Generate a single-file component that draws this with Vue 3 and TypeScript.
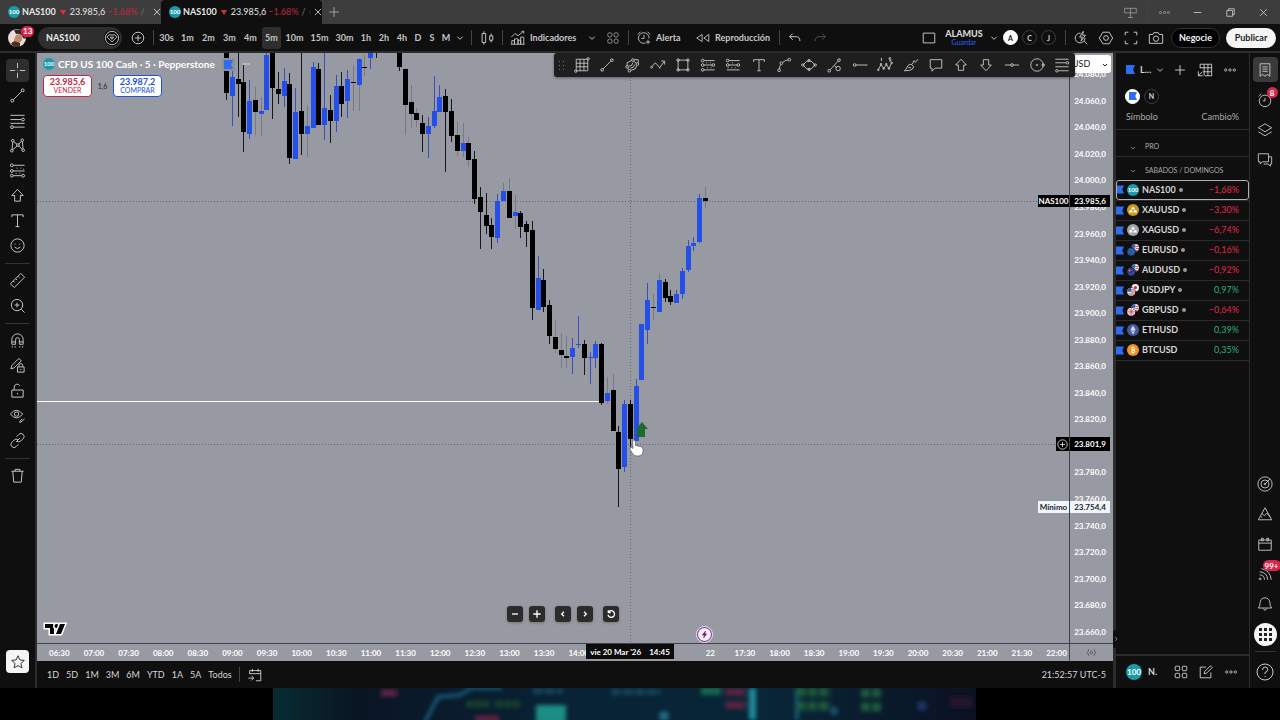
<script setup lang="ts">
import { h } from 'vue'

type Kind = 'up' | 'down'
interface Candle { i: number; top: number; bottom: number; high: number; low: number; kind: Kind; faint: boolean }
interface Quote { name: string; change: string; icon: string; live: boolean }

const c = (x: number, y: number, r: number): string =>
  `M${x - r} ${y}a${r} ${r} 0 1 0 ${2 * r} 0a${r} ${r} 0 1 0 ${-2 * r} 0z`

const icons: Record<string, string> = {
  cross: 'M9 1v5.500M9 11.500v5.500M1 9h5.500M11.500 9h5.500M8.700 9h.6',
  line: c(3.5, 14.5, 1.5) + c(14.500, 3.500, 1.500) + 'M4.600 13.400l8.800-8.800',
  hlines: 'M1.500 3.500h15M1.500 8h11.500M1.500 12h15M5 16h11.500' + c(14.8, 8, 1.5) + c(3.2, 16, 1.500),
  pattern: c(3, 14.500, 1.400) + c(4, 4, 1.400) + c(9.500, 8.500, 1.400) + c(14, 3.500, 1.400) + c(15, 14, 1.400) + 'M3.200 13L4 5.500M5 5l3.500 2.700M10.500 7.500l2.500-3M14.200 5l.7 7.500M4 13.500l4.600-4M10.500 9.600l3.500 3.500',
  forecast: c(3, 3.500, 1.500) + c(3, 9.500, 1.500) + c(3, 14.500, 1.500) + c(15, 14.500, 1.500) + 'M4.500 3.500h12M4.500 9.500h12M4.500 14.500h9M8 6.500h1M12 6.500h1M15 7.500h1M7 12h1M11 12h1',
  arrowUp: 'M9 2.500l6 6.500h-3v6H6V9H3z',
  arrowDown: 'M9 15.500L3 9h3V3h6v6h3z',
  text: 'M3 5.500V3h12v2.500M9 3v12.500M7 15.500h4',
  smile: c(9, 9, 7) + 'M6.500 7v1M11.500 7v1M6 10.800q3 3 6 0',
  ruler: 'M1.500 12.500L12.500 1.500 16.500 5.500 5.500 16.500zM4.500 9.500l1.500 1.500M7 7l1.500 1.500M9.500 4.500l1.500 1.500',
  zoom: c(8.500, 8.500, 6) + 'M13 13l3.500 3.500M8.500 6v5M6 8.500h5',
  magnet: 'M3 13V8a6 6 0 0 1 12 0v5h-4V8a2 2 0 0 0-4 0v5zM3 10.500h4M11 10.500h4M3.500 15v1.500M6.500 15v1.500M11.500 15v1.500M14.500 15v1.500',
  penLock: 'M2 12.500l1-3.500 7.500-7.500 2.500 2.500L5.500 11.500zM9 10.500h7v5.500H9zM10.500 10.500V9a2 2 0 0 1 4 0v1.500M12.500 12.500v1.500',
  lock: 'M3 8.500h12v7.500H3zM5.500 8.500V5.500a3.200 3.200 0 0 1 6-1.500M9 11.500v1.500',
  eye: 'M1.500 7.500q6-8 13 0q-6.500 8-13 0z' + c(8, 7.500, 2.300) + 'M11 15.500l3-3M12.500 16l4-3.500M11 16h2',
  link: 'M7.500 10.500l4-4M8 5l2.500-2.500a3 3 0 0 1 4.500 4.500L12.500 9.500a3 3 0 0 1-4 .3M10 13l-2.500 2.500A3 3 0 0 1 3 11L5.500 8.500a3 3 0 0 1 4-.3',
  trash: 'M2.500 4.500h13M6.500 4.500V2.500h5v2M4 4.500l1 11.500h8l1-11.500',
  star: 'M9 2l2.100 4.700 5 .5-3.800 3.400 1.100 5L9 13l-4.400 2.600 1.100-5L1.900 7.200l5-.5z',
  gridbox: 'M2.500 2.500h13v13h-13zM2.500 7h13M2.500 11h13M6.800 2.500v13M11.200 2.500v13' + c(16, 2, 1.300) + c(2, 16, 1.300),
  channel: c(3.500, 11, 1.500) + c(6, 15.500, 1.500) + c(10, 3.500, 1.500) + c(15, 8, 1.500) + 'M3.500 9.500V6.500l5-2.500M11 4.700l2.800 2.200M4.300 12.300l1 1.800M7.500 15l5-1.500 2-4M5 10.500l3.500-1 1.500-3M7 12.500l3.500-1 1.500-3M16 6.800V3h-4.500',
  zigzag: 'M2.500 10.500l3.500-4 5 5.500 5-7M12.500 4.500h4v4' + c(1.800, 11.500, 1) + 'M10 11.500l1.500 1.500',
  rect: 'M3.500 3.500h11v11h-11z' + c(3.500, 3.500, 1.400) + c(14.500, 3.500, 1.400) + c(3.500, 14.500, 1.400) + c(14.500, 14.500, 1.400),
  long: c(3, 4, 1.500) + c(3, 9, 1.500) + c(15, 9, 1.500) + c(3, 14.500, 1.500) + 'M4.500 4h12M4.500 9h9M4.500 14.500h12M7 6.500h1M11 6.500h1M8 12h1M12 12h1',
  short: c(3, 4, 1.500) + c(3, 9, 1.500) + c(15, 9, 1.500) + 'M4.500 4h12M4.500 9h9M2 14.500h14.500M3 12h1M7 12h1M11 12h1M8 6.500h1',
  curve: c(3.500, 15, 1.500) + c(6, 7, 1.500) + c(15, 3, 1.500) + 'M3.700 13.500q.3-3 1.700-5M7.300 6.200q3-2.500 6.200-3',
  ellipse: 'M2.500 9q6.500-10 13 0q-6.500 10-13 0z' + c(2, 9, 1.300) + c(16, 9, 1.300) + c(9, 4, 1.300) + c(9, 14, 1.300),
  measure: c(2.500, 15.500, 1.500) + c(13.500, 3.500, 1.500) + c(12.500, 13, 2.500) + 'M3.500 14.400l9-9.800M8.500 10l2 1.500',
  hray: c(3, 9, 1.500) + 'M4.500 9h13',
  waves: 'M1.500 14l3-5.500 3 4.500 3-4.500 3 4.500 3-6.500M5 1v3.500M16 1h-2.500v1.500h2v2h-2' + c(1.500, 14.500, .9) + c(4.500, 8, .9) + c(7.600, 13, .9) + c(10.500, 8, .9) + c(13.500, 13, .9) + c(16.500, 6.500, .9),
  brush: 'M1.500 15.500q2-1 3-4t4.500-3.500l3 2.500q-.5 4-4.500 4.500zM10.500 8l2-4 1.500 2 3-3.500M6 12h3',
  note: 'M2.500 3h13v9.500H8L4.500 16v-3.500h-2z',
  hline: c(9, 9, 1.500) + 'M1 9h6.500M10.500 9H17',
  cyclic: c(9, 9, 7) + c(9, 9, .7) + c(16, 9, 1.300),
  fib: 'M1.500 2.500h15M1.500 6.500h12M1.500 11h15M5 15.500h11.500' + c(15.200, 6.500, 1.400) + c(3.200, 15.500, 1.400),
  candles: 'M3.500 4h4v10h-4zM5.500 1.500V4M5.500 14v2.500M12 6.500h3.500v5H12zM13.700 4v2.500M13.700 11.500V14',
  indic: 'M1.500 8l4-4 3.500 2.500 6-5M2 16v-4h3v4M5 16v-6h4v6M9 16v-4.500h3V16M12 16V8h3.500v8M1 16h15.500M13 1.500h2.500V4',
  four: 'M2.500 3.500a1 1 0 0 1 1-1h3a1 1 0 0 1 1 1v3a1 1 0 0 1-1 1h-3a1 1 0 0 1-1-1zM10.500 3.500a1 1 0 0 1 1-1h3a1 1 0 0 1 1 1v3a1 1 0 0 1-1 1h-3a1 1 0 0 1-1-1zM2.500 11.500a1 1 0 0 1 1-1h3a1 1 0 0 1 1 1v3a1 1 0 0 1-1 1h-3a1 1 0 0 1-1-1zM10.500 11.500a1 1 0 0 1 1-1h3a1 1 0 0 1 1 1v3a1 1 0 0 1-1 1h-3a1 1 0 0 1-1-1z',
  rings: c(5.500, 5.500, 2.500) + c(12.500, 5.500, 2.500) + c(5.500, 12.500, 2.500) + c(12.500, 12.500, 2.500),
  clock: 'M14.700 9.500a6 6 0 1 0-4 5.200M9 5.500v4H6M2 5l3-3M13 2l3 3M13.500 11v5M11 13.500h5',
  replay: 'M8 5v8L2 9zM15.500 5v8L10 9z',
  undo: 'M6.500 4L3 7.500 6.500 11M3 7.500h7.500q4 0 4 5',
  redo: 'M11.500 4L15 7.500 11.500 11M15 7.500H7.500q-4 0-4 5',
  square: 'M2.500 3.500h13v11h-13z',
  quick: 'M13.500 9a5.500 5.500 0 1 1-5-5.500M12.500 12.500l3.500 3.500M11.500 1.500L7.500 8h3l-1.500 4.500 5-6.500h-3z',
  hex: 'M5.500 2.500h7L16.500 9l-4 6.500h-7L1.500 9z' + c(9, 9, 2.700),
  full: 'M2.500 6V2.500H6M12 2.500h3.500V6M15.500 12v3.500H12M6 15.500H2.500V12',
  camera: 'M1.500 5h4l1-2h5l1 2h4v10h-15z' + c(9, 9.800, 3),
  plusCircle: c(9, 9, 6.500) + 'M9 5.500v7M5.500 9h7',
  gem: c(9, 9, 7.500) + 'M5.500 5.500h7l2 2.500L9 13.500 3.500 8zM7 8h4l-2 2.500z',
  plus: 'M9 3.500v11M3.500 9h11',
  close: 'M5 5l8 8M13 5l-8 8',
  chev: 'M6 7.500l3 3 3-3',
  dots: c(3.500, 9, 1.500) + c(9, 9, 1.500) + c(14.500, 9, 1.500),
  table: 'M3.500 7V2.500h13v13H9M3.500 6.500h13M8 2.500v13M12.300 2.500v13M7 11h9.500M1.500 10.500v5h5M1.500 15.500L6 11',
  list: 'M3.500 2h11v14l-2.700-2-2.800 2-2.800-2-2.700 2zM6 5.500h6M6 8h6M6 10.500h6',
  alarm: c(9, 10, 6.500) + 'M9 6.500V10H6.500M2 5l3-3M13 2l3 3',
  layers: 'M9 2l7.500 4.500L9 11 1.500 6.500zM1.500 11L9 15.500l7.500-4.500',
  chat: 'M1.500 2h11.500v9H6l-2.500 2.500V11h-2zM13 5.500h3.500v8h-1.500V16l-2.500-2.500H7.500',
  radar: c(9, 9, 8) + c(9, 9, 4.500) + c(9, 9, 1) + 'M9.500 8.500l5-5',
  pyramid: 'M9 2l7.500 13.500h-15zM5.500 8.500l3 2.500L11 8l4 4.500M4 11.500l2 1.500',
  calendar: 'M2 4.500h14v11.500H2zM2 8h14M5 2.500h2v3H5zM11 2.500h2v3h-2z',
  feed: c(3.500, 14.500, 1) + 'M3 10q5 0 5.500 5.500M3 6.500q8.500.5 9 9M5 3q10 2 11 12.500',
  bell: 'M1.500 13.500q2-2 2-6a5.500 5.500 0 0 1 11 0q0 4 2 6zM7 14q2 4 4 0',
  help: c(9, 9, 8) + 'M6.500 7q0-3 2.700-3t2.500 2.500T9 9.500v1.500M9 13v1',
  edit: 'M9 3.500H2.500v12h12V9.500M7 11l.5-2.500L14 2l2 2-6.500 6.500z',
  goto: 'M3 8V4h12.500v11.500H10M3 7.500h12.500M6 2v3.500M12.500 2v3.500M1.500 12.500h6M5 10l2.500 2.500L5 15',
  axis: 'M5 3.500L2.500 9 5 14.500M13 3.500L15.500 9 13 14.500' + c(9, 9, 2),
  panels: 'M2 4h14v5.500H2zM9 4v11M6 15h6',
  restore: 'M4.500 6.500h7v7h-7zM6.500 6.500v-2h7v7h-2',
  minimize: 'M4.500 9h9',
  prev: 'M10.500 5.500L7 9l3.500 3.500',
  next: 'M7.500 5.500L11 9l-3.500 3.500',
  reset: 'M5 6.500a5 5 0 1 1-.5 4M5 3.500v3.500h3.500',
  bolt: 'M10.500 3.500L5.500 10h3.500l-1.500 4.500 5-6.500H9.500z',
}

const Icon = (props: { name: string }) =>
  h('svg', { class: 'icon', viewBox: '0 0 18 18', 'aria-hidden': 'true' }, [h('path', { d: icons[props.name] })])
Icon.props = ['name']

const Flag = () =>
  h('svg', { class: 'flag', viewBox: '0 0 9 9', 'aria-hidden': 'true' }, [h('path', { d: 'M0 0h9L7 4.500 9 9H0z', fill: '#2f6df0' })])

const tabs = [{ active: false }, { active: true }]
const frames = [
  ['30s', 'm'], ['1m', 'm'], ['2m', 'm'], ['3m', 'm'], ['4m', 'm'], ['5m', 'm'],
  ['10m', 'l'], ['15m', 'l'], ['30m', 'l'], ['1h', 's'], ['2h', 's'], ['4h', 's'], ['D', 'xs'], ['S', 'xs'], ['M', 'xs'],
]
const leftGroups = [
  ['cross', 'line', 'hlines', 'pattern', 'forecast', 'arrowUp', 'text', 'smile'],
  ['ruler', 'zoom'],
  ['magnet', 'penLock', 'lock', 'eye', 'link'],
  ['trash'],
]
const drawTools = ['gridbox', 'line', 'channel', 'zigzag', 'rect', 'long', 'short', 'text', 'curve', 'ellipse', 'measure', 'hray', 'waves', 'brush', 'note', 'arrowUp', 'arrowDown', 'hline', 'cyclic', 'fib']
const ranges = ['1D', '5D', '1M', '3M', '6M', 'YTD', '1A', '5A', 'Todos']

const quotes: Quote[] = [
  { name: 'NAS100', change: '−1,68%', icon: 'nas', live: true },
  { name: 'XAUUSD', change: '−3,30%', icon: 'gold', live: true },
  { name: 'XAGUSD', change: '−6,74%', icon: 'silver', live: true },
  { name: 'EURUSD', change: '−0,16%', icon: 'eur', live: true },
  { name: 'AUDUSD', change: '−0,92%', icon: 'aud', live: true },
  { name: 'USDJPY', change: '0,97%', icon: 'jpy', live: true },
  { name: 'GBPUSD', change: '−0,64%', icon: 'gbp', live: true },
  { name: 'ETHUSD', change: '0,39%', icon: 'eth', live: false },
  { name: 'BTCUSD', change: '0,35%', icon: 'btc', live: false },
]

const format = (p: number): string => {
  const [whole, dec] = p.toFixed(1).split('.')
  return `${whole.slice(0, 2)}.${whole.slice(2)},${dec}`
}
const prices = Array.from({ length: 22 }, (_, i) => format(24080 - i * 20))
const clock = (half: number): string => `${String(Math.floor(half / 2)).padStart(2, '0')}:${half % 2 ? '30' : '00'}`
const morning = Array.from({ length: 16 }, (_, i) => clock(13 + i))
const evening = ['22', ...Array.from({ length: 10 }, (_, i) => clock(35 + i))]

/* index, body top, body bottom, high, low, kind (u/d), f = faint wick */
const raw = `0 0 40 0 47 d|1 24 43 15 73 u|2 26 31 0 64 d|3 29 79 12 99 d|4 48 81 27 86 u|5 47 59 34 82 d f|6 58 61 44 83 u f
7 2 57 0 57 u|8 0 35 0 66 d|9 36 41 19 51 d|10 28 43 15 54 u|11 31 105 20 111 d|12 59 106 35 106 u|13 58 81 0 102 d
14 73 81 52 104 u f|15 14 75 9 75 u|16 16 72 10 72 d|17 55 72 0 87 u|18 57 68 42 90 d|19 33 68 22 79 u|20 33 51 19 64 d
21 26 48 17 65 u|22 29 30 12 58 d f|23 6 32 5 58 u f|24 14 15 2 23 d f|25 0 5 0 16 u|26 0 0 0 5 d|30 0 14 0 18 d|31 16 52 15 82 d f
32 49 61 32 75 d f|33 60 67 55 74 d f|34 70 81 62 99 d|35 73 81 64 105 u|36 58 73 23 75 u|37 44 59 32 59 u|38 43 59 36 119 d
39 58 83 46 89 d|40 82 98 69 103 d f|41 90 98 70 104 u f|42 90 107 84 114 d f|43 106 146 98 151 d|44 144 159 134 196 d
45 162 173 140 181 d|46 172 184 165 196 d|47 148 185 141 190 u|48 138 148 130 148 u f|49 138 165 125 165 d f|50 159 163 142 176 u f
51 160 174 158 185 d|52 171 179 168 194 d|53 177 255 168 267 d|54 225 257 203 257 u|55 227 254 216 259 d|56 252 283 247 291 d
57 284 296 267 300 d f|58 297 302 280 315 d f|59 303 305 283 315 d f|60 295 304 285 321 u|61 291 292 263 295 u|62 291 305 287 322 d
63 304 305 299 331 u|64 291 305 288 315 u|65 291 350 290 352 d|66 340 348 324 351 u f|67 337 378 321 378 d f|68 379 416 373 454 d
69 351 414 347 419 u|70 351 386 347 394 d|71 333 388 326 388 u|72 271 327 271 327 u|73 247 277 230 291 u|74 254 255 241 267 d f
75 227 259 220 259 u f|76 229 245 226 249 d|77 243 249 237 252 d|78 241 250 237 250 u|79 218 241 215 246 u|80 193 217 187 219 u
81 190 193 184 198 u|82 145 189 141 190 u|83 145 148 134 155 d f`
const candles: Candle[] = raw.split(/[|\n]/).map((row) => {
  const p = row.trim().split(' ')
  return { i: +p[0], top: +p[1], bottom: +p[2], high: +p[3], low: +p[4], kind: p[5] === 'u' ? 'up' : 'down', faint: p[6] === 'f' }
})
const cx = (i: number): number => Math.round(189 + i * 5.77)
</script>

<template>
  <div class="app">
    <header class="tabs">
      <div v-for="(t, n) in tabs" :key="n" class="tab" :class="{ on: t.active }">
        <span class="coin nas small">100</span>
        <b>NAS100</b><i class="tri"></i><span>23.985,6</span><span class="neg">−1.68%</span><span class="slash">/</span><span class="slash cut">‹</span>
        <button class="bare end" aria-label="Cerrar pestaña"><Icon name="close" /></button>
      </div>
      <button class="bare newtab" aria-label="Nueva pestaña"><Icon name="plus" /></button>
      <div class="window">
        <button class="bare" aria-label="Paneles"><Icon name="panels" /></button>
        <span class="vr"></span>
        <button class="bare tiny" aria-label="Más"><Icon name="dots" /></button>
        <button class="bare" aria-label="Minimizar"><Icon name="minimize" /></button>
        <button class="bare" aria-label="Restaurar"><Icon name="restore" /></button>
        <button class="bare" aria-label="Cerrar"><Icon name="close" /></button>
      </div>
    </header>

    <nav class="bar">
      <div class="profile">
        <svg class="face" viewBox="0 0 18 18" aria-hidden="true">
          <circle cx="9" cy="9" r="9" fill="#e9ddd5" /><path d="M6 1a9 9 0 0 1 12 8q-1 1-3 0Q13 4 8 5z" fill="#35251f" /><path d="M8 6q5-2 6 2t-3 6-5-3z" fill="#bd8a70" /><path d="M3 15q2-4 6-2l3 1v4H7z" fill="#4b2c26" />
        </svg>
        <span class="badge">13</span>
      </div>
      <button class="symbol">NAS100 <Icon name="gem" /></button>
      <button class="bare slot" aria-label="Comparar"><Icon name="plusCircle" /></button>
      <span class="vr"></span>
      <div class="frames">
        <button v-for="f in frames" :key="f[0]" class="frame" :class="[f[1], { on: f[0] === '5m' }]"><span>{{ f[0] }}</span></button>
        <button class="bare mini" aria-label="Más intervalos"><Icon name="chev" /></button>
      </div>
      <span class="vr"></span>
      <button class="bare slot30" aria-label="Velas"><Icon name="candles" /></button>
      <span class="vr"></span>
      <button class="label ind"><Icon name="indic" />Indicadores</button>
      <button class="bare slot22" aria-label="Favoritos"><Icon name="chev" /></button>
      <button class="bare dim" aria-label="Plantillas"><Icon name="rings" /></button>
      <span class="vr"></span>
      <button class="label alert"><Icon name="clock" />Alerta</button>
      <button class="label play"><Icon name="replay" />Reproducción</button>
      <span class="vr"></span>
      <button class="bare slot30" aria-label="Deshacer"><Icon name="undo" /></button>
      <button class="bare faded" aria-label="Rehacer"><Icon name="redo" /></button>
      <div class="right">
        <button class="bare slot24" aria-label="Diseño"><Icon name="square" /></button>
        <button class="layout"><b>ALAMUS</b><span>Guardar</span></button>
        <button class="bare mini" aria-label="Diseños"><Icon name="chev" /></button>
        <button class="letter on">A</button><button class="letter">C</button><button class="letter">J</button>
        <span class="vr gap"></span>
        <button class="bare slot" aria-label="Buscar"><Icon name="quick" /></button>
        <button class="bare slot" aria-label="Ajustes"><Icon name="hex" /></button>
        <button class="bare slot" aria-label="Pantalla completa"><Icon name="full" /></button>
        <button class="bare slot" aria-label="Captura"><Icon name="camera" /></button>
        <button class="pill dark">Negocie</button>
        <button class="pill">Publicar</button>
      </div>
    </nav>

    <div class="body">
      <aside class="tools">
        <div v-for="(g, gi) in leftGroups" :key="gi" class="group">
          <button v-for="t in g" :key="t" class="bare tool" :class="{ on: t === 'cross' }" :aria-label="t"><Icon :name="t" /></button>
        </div>
        <button class="bare fav" aria-label="Favoritos"><Icon name="star" /></button>
      </aside>

      <main class="chart">
        <div class="upper">
          <section class="plot">
            <svg class="canvas" role="img" aria-label="Gráfico de velas NAS100">
              <line class="cross" x1="0" x2="100%" y1="148.500" y2="148.500" />
              <line class="cross" x1="0" x2="100%" y1="391.500" y2="391.500" />
              <line class="cross" x1="593.500" x2="593.500" y1="0" y2="100%" />
              <line x1="0" x2="564" y1="348.500" y2="348.500" stroke="#fff" />
              <g v-for="k in candles" :key="k.i" :class="[k.kind, { faint: k.faint }]">
                <rect class="wick" :x="cx(k.i)" :y="k.high" width="1" :height="k.low - k.high" />
                <rect v-if="k.bottom > k.top" class="solid" :x="cx(k.i) - 2" :y="k.top" width="5" :height="k.bottom - k.top" />
              </g>
              <path d="M605 369l6 7h-3v8h-8v-8h-1z" fill="#1c6b2c" />
              <path d="M595.500 389q0-2 1.500-2t1.500 2v3.500l5 1q2.500.5 2.500 2.500v2q0 5-5 5h-1q-3 0-4-2l-3-4.500q-.5-2 1.500-2l1.500 1z" fill="#fff" stroke="#444" stroke-width=".6" />
              <g transform="translate(6 568)" class="logo">
                <path d="M2 3h9v10H7V7H2z" /><circle cx="13.500" cy="5" r="2" /><path d="M17 3h5l-4 10h-5z" />
              </g>
            </svg>
            <div class="legend">
              <span class="coin nas">100</span><span>CFD US 100 Cash · 5 · Pepperstone</span><span class="mark"><Flag /></span><i class="dash"></i>
            </div>
            <div class="deal">
              <button class="sell"><b>23.985,6</b>VENDER</button><span>1,6</span><button class="buy"><b>23.987,2</b>COMPRAR</button>
            </div>
            <div class="pager">
              <button aria-label="Alejar"><Icon name="minimize" /></button><button aria-label="Acercar"><Icon name="plus" /></button>
              <button class="sp" aria-label="Atrás"><Icon name="prev" /></button><button aria-label="Adelante"><Icon name="next" /></button>
              <button class="sp" aria-label="Restablecer"><Icon name="reset" /></button>
            </div>
            <span class="event"><Icon name="bolt" /></span>
            <span class="tag last">NAS100</span>
            <span class="tag hover"><Icon name="plusCircle" /></span>
            <span class="tag low">Mínimo</span>
          </section>
          <section class="prices">
            <div class="scale"><span v-for="p in prices" :key="p">{{ p }}</span></div>
            <select class="currency" aria-label="Divisa"><option>USD</option></select>
            <svg class="caret" viewBox="0 0 6 4" aria-hidden="true"><path d="M1 1l2 2 2-2" /></svg>
            <span class="val last">23.985,6</span>
            <span class="val hover">23.801,9</span>
            <span class="val low">23.754,4</span>
          </section>
          <div class="draw">
            <span class="grip"><i v-for="n in 6" :key="n"></i></span>
            <button v-for="t in drawTools" :key="t" class="bare" :aria-label="t"><Icon :name="t" /></button>
          </div>
        </div>
        <div class="times">
          <div class="hours">
            <span v-for="t in morning" :key="t">{{ t }}</span><i></i><span v-for="t in evening" :key="t">{{ t }}</span>
            <div class="stamp"><span>vie 20 Mar '26</span><span>14:45</span></div>
          </div>
          <button class="bare corner" aria-label="Escala"><Icon name="axis" /></button>
        </div>
        <footer class="ranges">
          <button v-for="r in ranges" :key="r" class="range">{{ r }}</button>
          <span class="vr"></span>
          <button class="bare" aria-label="Ir a"><Icon name="goto" /></button>
          <time>21:52:57 UTC-5</time>
        </footer>
      </main>

      <aside class="watch">
        <button class="handle" aria-label="Contraer"><Icon name="next" /></button>
        <div class="whead">
          <Flag /><span class="wname">L...</span><button class="bare mini" aria-label="Listas"><Icon name="chev" /></button>
          <button class="bare slot" aria-label="Añadir"><Icon name="plus" /></button>
          <button class="bare slot" aria-label="Tabla"><Icon name="table" /></button>
          <button class="bare slot small" aria-label="Más"><Icon name="dots" /></button>
        </div>
        <div class="lists"><button class="letter on" aria-label="Lista azul"><Flag /></button><button class="letter">N</button></div>
        <table>
          <thead><tr><th>Símbolo</th><th class="num">Cambio%</th></tr></thead>
          <tbody>
            <tr class="sec pro"><td colspan="2"><Icon name="chev" />PRO</td></tr>
            <tr class="sec"><td colspan="2"><Icon name="chev" />SABADOS / DOMINGOS</td></tr>
            <tr v-for="q in quotes" :key="q.name" class="quote" :class="{ on: q.name === 'NAS100' }">
              <td>
                <div class="sym">
                  <Flag />
                  <span v-if="q.icon === 'nas'" class="coin nas">100</span>
                  <svg v-else class="sicon" viewBox="0 0 12 12" aria-hidden="true">
                    <template v-if="q.icon === 'gold' || q.icon === 'silver'">
                      <circle cx="6" cy="6" r="6" :fill="q.icon === 'gold' ? '#c79a1f' : '#a4a4ab'" />
                      <path d="M5 3.200h2l.8 2.200H4.200zM2.800 6.200h2.200l.7 2.200H2zM7 6.200h2.200l.8 2.200H6.300z" fill="#fff" />
                    </template>
                    <template v-else-if="q.icon === 'eth'">
                      <circle cx="6" cy="6" r="6" fill="#475a9e" /><path d="M6 1.500L8.700 6 6 10.500 3.300 6z" fill="#cfd8ff" /><path d="M3.300 6L6 7.500 8.700 6" fill="none" stroke="#475a9e" stroke-width=".7" />
                    </template>
                    <template v-else-if="q.icon === 'btc'">
                      <circle cx="6" cy="6" r="6" fill="#ef9422" /><path d="M4.500 3.500h2.200q1.500 1.200 0 2.500H5M5 6h2q1.600 1.300 0 2.600H4.300M5 3.500v5M6 2.500v1M6 8.600v1" fill="none" stroke="#fff" />
                    </template>
                    <template v-else>
                      <circle cx="8.300" cy="3.700" r="3.700" fill="#f3eeee" />
                      <path v-if="q.icon !== 'jpy'" d="M8.500 2.500h3.300M8.500 4.500h3.300M7 6.500h3.500" stroke="#d23b4c" stroke-width=".9" />
                      <path v-if="q.icon !== 'jpy'" d="M4.600 3.700A3.700 3.700 0 0 1 8.300 0v3.700z" fill="#355fb5" />
                      <circle v-else cx="8.500" cy="3.500" r="1.500" fill="#d5293e" />
                      <circle cx="4.200" cy="7.800" r="4.500" fill="#101010" />
                      <circle cx="4.200" cy="7.800" r="4" :fill="q.icon === 'eur' ? '#1c4fa8' : q.icon === 'aud' ? '#24408e' : '#efe3e5'" />
                      <circle v-if="q.icon === 'eur'" cx="4.200" cy="7.800" r="2" fill="none" stroke="#b8b24a" stroke-width=".7" stroke-dasharray="1 1" />
                      <path v-if="q.icon === 'aud'" d="M1 6.500h3.500M2.700 4.500V8M6 8.500v1M4 10v1" stroke="#e5566a" stroke-width=".8" />
                      <path v-if="q.icon === 'jpy'" d="M4 6h3.800M4 8h4M1.500 10h5.500" stroke="#d23b4c" stroke-width=".9" />
                      <path v-if="q.icon === 'jpy'" d="M.2 7.800a4 4 0 0 1 4-4v4z" fill="#355fb5" />
                      <path v-if="q.icon === 'gbp'" d="M.2 7.800h8M4.200 3.800v8M1.500 5l5.400 5.600M6.900 5l-5.400 5.600" stroke="#d0475d" stroke-width=".8" />
                    </template>
                  </svg>
                  <span>{{ q.name }}</span><i v-if="q.live" class="live"></i>
                </div>
              </td>
              <td class="num" :class="q.change.startsWith('−') ? 'neg' : 'pos'">{{ q.change }}</td>
            </tr>
          </tbody>
        </table>
        <div class="detail">
          <span class="coin nas big">100</span><b>N.</b>
          <button class="bare slot" aria-label="Vista"><Icon name="four" /></button>
          <button class="bare slot" aria-label="Notas"><Icon name="edit" /></button>
          <button class="bare slot small" aria-label="Más"><Icon name="dots" /></button>
        </div>
      </aside>

      <aside class="rail">
        <button class="bare on" aria-label="Lista de seguimiento"><Icon name="list" /></button>
        <button class="bare" aria-label="Alertas"><Icon name="alarm" /><span class="badge">8</span></button>
        <button class="bare" aria-label="Capas"><Icon name="layers" /></button>
        <button class="bare" aria-label="Chats"><Icon name="chat" /></button>
        <span class="grow"></span>
        <button class="bare" aria-label="Filtros"><Icon name="radar" /></button>
        <button class="bare" aria-label="Pine"><Icon name="pyramid" /></button>
        <button class="bare" aria-label="Calendario"><Icon name="calendar" /></button>
        <button class="bare" aria-label="Noticias"><Icon name="feed" /><span class="badge wide">99+</span></button>
        <button class="bare" aria-label="Notificaciones"><Icon name="bell" /></button>
        <button class="bare apps" aria-label="Productos"><i v-for="n in 9" :key="n"></i></button>
        <hr />
        <button class="bare ask" aria-label="Ayuda"><Icon name="help" /></button>
      </aside>
    </div>

    <div class="strip">
      <svg viewBox="0 0 703 32" preserveAspectRatio="none" aria-hidden="true">
        <defs>
          <linearGradient id="sea"><stop offset="0" stop-color="#082b32" /><stop offset=".12" stop-color="#0a1524" /><stop offset=".4" stop-color="#082234" /><stop offset=".7" stop-color="#082637" /><stop offset="1" stop-color="#0b1122" /></linearGradient>
          <filter id="soft"><feGaussianBlur stdDeviation="2" /></filter>
        </defs>
        <rect width="703" height="32" fill="url(#sea)" />
        <g filter="url(#soft)">
          <path d="M152 34l13-25 22-2 12-7h30" fill="none" stroke="#1d6685" stroke-width="3" />
          <rect x="263" y="17" width="30" height="18" fill="#1a8d84" />
          <path d="M338 4h50M260 3h30" stroke="#17455b" stroke-width="6" stroke-dasharray="10 2" />
          <path d="M193 16h24m5 0h25" stroke="#163f2c" stroke-width="7" stroke-dasharray="8 1" />
          <path d="M428 3h20" stroke="#156650" stroke-width="8" />
          <path d="M452 4h20M452 17h20M108 5h16M202 31h24" stroke="#5f2440" stroke-width="7" />
          <rect x="476" y="0" width="7" height="32" fill="#248a9d" />
          <path d="M524 0v32" stroke="#155e72" stroke-width="4" />
          <path d="M524 4h34M524 18h34M588 5h20M588 19h20" stroke="#1d5a3b" stroke-width="9" stroke-dasharray="9 2" />
          <circle cx="391" cy="28" r="5" fill="#226a83" /><circle cx="561" cy="23" r="4" fill="#1b516f" /><circle cx="649" cy="18" r="5" fill="#1b3568" />
          <rect x="676" y="8" width="24" height="12" fill="#21172c" />
        </g>
      </svg>
    </div>
  </div>
</template>

<style>
body { margin: 0; background: #000; }
</style>

<style scoped>
* { box-sizing: border-box; }
.app { display: flex; flex-direction: column; min-height: 100vh; background: #000; color: #d6d6d6; font: 9px/12px Lato, "Noto Sans", sans-serif; }
button { font: inherit; color: inherit; background: none; border: 0; padding: 0; margin: 0; display: flex; align-items: center; justify-content: center; white-space: nowrap; flex: none; }
.icon { width: 16px; height: 16px; fill: none; stroke: currentColor; stroke-width: 1; flex: none; overflow: visible; }
.flag { width: 9px; height: 9px; flex: none; }
.vr { width: 1px; height: 15px; background: #444; flex: none; }
.coin { display: inline-flex; align-items: center; justify-content: center; width: 12px; height: 12px; border-radius: 50%; background: #1a9aaa; color: #fff; font-size: 6px; line-height: 6px; font-weight: 700; flex: none; }
.coin.big { width: 16px; height: 16px; font-size: 8px; }
.neg { color: #e0294a; }
.pos { color: #2bb07f; }
.badge { position: absolute; display: flex; align-items: center; justify-content: center; height: 11px; min-width: 11px; padding: 0 2px; border-radius: 6px; background: #d8264c; color: #fff; font-size: 8px; line-height: 8px; font-weight: 700; }

.tabs { display: flex; align-items: center; height: 24px; background: #3d3d3d; }
.tab { display: flex; align-items: center; width: 161px; height: 24px; padding: 0 2px 0 8px; white-space: nowrap; color: #e6e6e6; }
.tab.on { background: #0f0f0f; border-radius: 4px 4px 0 0; }
.tab b { margin-left: 2px; font-weight: 700; }
.tab .tri { margin: 0 4px; border: 3px solid transparent; border-top: 5px solid #e0294a; border-bottom: 0; }
.tab .neg { margin-left: 2px; color: #c02644; }
.slash { margin-left: 3px; color: #777; }
.cut { color: #444; }
.end { margin-left: auto; }
.tab .icon { width: 14px; height: 14px; }
.newtab { margin-left: 4px; color: #aaa; }
.window { display: flex; align-items: center; margin-left: auto; color: #ccc; }
.window .bare { width: 33px; }
.window .bare:first-child { color: #999; }
.window .tiny .icon { width: 13px; color: #aaa; }
.window .icon { width: 15px; height: 15px; }

.bar { display: flex; align-items: center; height: 29px; background: #0f0f0f; border-bottom: 2px solid #2c2c2c; padding: 0 4px 0 8px; font-weight: 700; }
.profile { position: relative; width: 30px; }
.face { display: block; width: 18px; height: 18px; }
.profile .badge { top: -3px; left: 13px; }
.symbol { width: 84px; height: 22px; padding: 0 2px 0 8px; justify-content: space-between; background: #2e2e2e; border-radius: 11px; color: #eee; }
.symbol .icon { color: #ccc; background: #0f0f0f; border-radius: 50%; }
.slot { width: 25px; }
.slot30 { width: 30px; }
.slot24 { width: 24px; }
.slot22 { width: 22px; }
.symbol + .slot { width: 31px; }
.mini { width: 14px; }
.frames { display: flex; align-items: center; padding-left: 2px; margin-right: 4px; }
.frame { height: 22px; border-radius: 3px; color: #c4c4c4; }
.frame.m { width: 21px; }
.frame.l { width: 25px; }
.frame.s { width: 18px; }
.frame.xs { width: 14px; }
.frame.on span { background: #2e2e2e; border-radius: 3px; padding: 5px 3px; }
.label { color: #c8c8c8; gap: 4px; justify-content: flex-start; padding-left: 7px; }
.ind { width: 78px; }
.alert { width: 66px; }
.play { width: 84px; padding-left: 0; }
.dim { color: #999; width: 20px; margin-right: 5px; }
.faded { color: #555; width: 20px; }
.right { display: flex; align-items: center; margin-left: auto; }
.layout { flex-direction: column; width: 46px; line-height: 10px; }
.layout span { color: #2962ff; font-size: 7px; line-height: 7px; font-weight: 400; }
.letter { width: 15px; height: 15px; margin: 0 2px; border: 1px solid #3d3d3d; border-radius: 50%; font-size: 7px; line-height: 8px; font-weight: 700; }
.letter.on { background: #fff; border-color: #fff; color: #111; }
.gap { margin: 0 2px 0 7px; }
.pill { height: 20px; width: 50px; border-radius: 10px; background: #f5f5f5; color: #222; margin-left: 6px; }
.pill.dark { width: 49px; background: #000; color: #f5f5f5; border: 1px solid #333; margin-left: 3px; }

.body { flex: 1; display: flex; min-height: 0; }
.tools { width: 37px; flex: none; display: flex; flex-direction: column; align-items: center; background: #0f0f0f; border-right: 2px solid #2c2c2c; padding: 5px 0 15px; color: #ccc; }
.group + .group { border-top: 1px solid #333; margin-top: 5px; padding-top: 4px; }
.tool { width: 25px; height: 25px; }
.tool .icon { width: 17px; height: 17px; }
.tool.on { height: 23px; width: 23px; margin: 1px; background: #2e2e2e; border-radius: 4px; }
.fav { margin-top: auto; width: 23px; height: 23px; border-radius: 4px; background: #f5f5f5; color: #222; }

.chart { flex: 1; min-width: 0; display: flex; flex-direction: column; background: #989aa3; }
.upper { position: relative; flex: 1; display: flex; border-bottom: 1px solid #3f424a; }
.plot { position: relative; flex: 1; min-width: 0; border-right: 1px solid #3f424a; }
.canvas { position: absolute; inset: 0; width: 100%; height: 100%; }
.cross { stroke: #62656e; stroke-dasharray: 1 2; }
.up rect { fill: #2450e8; }
.down rect { fill: #000; }
.up .wick { fill: #3a4fb8; }
.down .wick { fill: #15171c; }
.faint .wick { fill: #777983; }
.logo { fill: #000; stroke: #fff; stroke-width: 3; paint-order: stroke; }
.legend { position: absolute; top: 4px; left: 6px; display: flex; align-items: center; gap: 3px; height: 14px; color: #fff; font-size: 10px; line-height: 14px; font-weight: 700; white-space: nowrap; }
.mark { display: flex; margin-left: 4px; padding: 2px; background: #8b9099; }
.dash { width: 8px; height: 2px; margin-left: 4px; background: #b4b6bc; }
.deal { position: absolute; top: 22px; left: 6px; display: flex; align-items: center; font-size: 7px; }
.deal > span { width: 21px; text-align: center; color: #222; }
.deal button { flex-direction: column; width: 49px; height: 22px; border: 1px solid; border-radius: 4px; background: #fff; line-height: 9px; }
.deal b { font-size: 9px; }
.sell { color: #c22744; }
.buy { color: #2450d8; }
.pager { position: absolute; left: 470px; bottom: 21px; display: flex; gap: 6px; }
.pager button { width: 16px; height: 16px; border-radius: 3px; background: #2b2b2b; color: #fff; box-shadow: 0 1px 3px #5558; }
.pager .icon { width: 12px; height: 12px; stroke-width: 2; }
.pager .sp { margin-left: 4px; }
.event { position: absolute; left: 660px; bottom: 1px; width: 15px; height: 15px; display: flex; align-items: center; justify-content: center; border: 1px solid #5b2470; border-radius: 50%; background: #fbeaff; color: #5b2470; outline: 1px solid #f6dcfa; }
.event .icon { width: 11px; height: 11px; fill: currentColor; }
.tag, .val { position: absolute; right: 0; display: flex; align-items: center; justify-content: center; height: 12px; padding: 0 2px; background: #000; color: #fff; font-size: 8px; line-height: 12px; font-weight: 700; }
.last { top: 142px; }
.hover { top: 384px; height: 14px; }
.low { top: 448px; background: #f0f4fb; color: #22252d; }
.tag { width: 31px; }
.tag.hover { width: 13px; }
.tag.hover .icon { width: 13px; height: 13px; }
.prices { position: relative; width: 43px; flex: none; display: flex; overflow: hidden; }
.val { left: 0; right: 3px; padding: 0; }
.scale { flex: 1; display: flex; flex-direction: column; margin: 8px 3px -2px 0; font-size: 8px; line-height: 10px; font-weight: 700; color: #fff; text-align: center; }
.scale span { flex: 1; display: flex; align-items: center; justify-content: center; }
.currency { position: absolute; top: 2px; left: 1px; width: 40px; height: 18px; appearance: none; border: 0; border-radius: 3px; background: #fff; color: #222; font: 9px/12px Lato, sans-serif; padding: 0 0 0 1px; }
.caret { position: absolute; top: 10px; right: 5px; width: 6px; height: 4px; fill: none; stroke: #222; }
.draw { position: absolute; top: 0; left: 517px; right: 38px; height: 24px; display: flex; align-items: center; background: #1e1e1e; border-radius: 3px; color: #ccc; box-shadow: 0 1px 3px #0006; }
.draw .bare { flex: 1; }
.grip { display: grid; grid-template-columns: 1px 1px; gap: 3px; width: 15px; justify-content: center; }
.grip i { width: 1px; height: 1px; background: #777; }
.times { display: flex; height: 17px; font-size: 8px; font-weight: 700; color: #fff; }
.hours { position: relative; flex: 1; display: flex; align-items: center; padding-left: 5px; margin-right: -5px; }
.hours > span { flex: 1 1 0; text-align: center; }
.hours > i { flex: 2.8 1 0; }
.stamp { position: absolute; left: 549px; top: 0; width: 88px; height: 15px; display: flex; gap: 8px; align-items: center; justify-content: center; background: #0c0c0c; white-space: nowrap; }
.corner { width: 44px; border-left: 1px solid #3f424a; color: #33363d; }
.corner .icon { width: 11px; height: 11px; }
.ranges { display: flex; align-items: center; gap: 7px; height: 27px; padding: 0 7px 0 10px; background: #0f0f0f; }
.ranges time { margin-left: auto; }

.watch { position: relative; width: 136px; flex: none; display: flex; flex-direction: column; background: #0f0f0f; border-left: 3px solid #2c2c2c; }
.handle { position: absolute; left: -3px; top: 577px; width: 6px; height: 18px; border-radius: 2px; background: #0f0f0f; }
.handle .icon { width: 10px; height: 10px; }
.whead { display: flex; align-items: center; height: 33px; padding-left: 10px; }
.wname { margin-left: 5px; width: 13px; font-weight: 700; }
.small .icon { width: 14px; height: 14px; }
.lists { display: flex; height: 20px; align-items: center; padding-left: 7px; }
.letter .flag { width: 8px; height: 8px; }
table { width: 100%; border-collapse: collapse; table-layout: fixed; }
th, td { padding: 0; text-align: left; font-weight: 400; }
th { height: 23px; padding-left: 10px; color: #aaa; border-bottom: 1px solid #2c2c2c; }
.num { text-align: right; padding-right: 10px; }
th.num { padding-left: 0; }
.sec td { height: 24px; padding: 4px 0 0 11px; font-size: 7px; color: #aaa; }
.sec.pro td { height: 27px; padding-top: 9px; border-bottom: 1px solid #2c2c2c; }
.sec .icon { width: 12px; height: 12px; vertical-align: middle; margin-right: 6px; }
.quote td { height: 20px; border-bottom: 1px solid #2c2c2c; }
.quote.on { outline: 1px solid #b0b0b0; outline-offset: -1px; border-radius: 3px; }
.sym { display: flex; align-items: center; font-weight: 700; }
.sym .flag { width: 8px; margin-right: 3px; }
.sicon { width: 12px; height: 12px; flex: none; }
.sym .sicon + span, .sym .coin + span { margin-left: 3px; }
.live { width: 4px; height: 4px; margin-left: 3px; border-radius: 50%; background: #999; flex: none; }
.detail { display: flex; align-items: center; height: 34px; margin-top: auto; padding-left: 10px; border-top: 2px solid #2c2c2c; }
.detail b { width: 20px; margin-left: 6px; }

.rail { width: 31px; flex: none; display: flex; flex-direction: column; align-items: center; padding: 4px 0 4px; background: #0f0f0f; border-left: 1px solid #2c2c2c; color: #ccc; }
.rail .bare { position: relative; width: 25px; height: 25px; margin-bottom: 5px; }
.rail .on { background: #3a3a3a; border-radius: 4px; }
.rail .badge { top: 0; right: 0; }
.rail .badge.wide { right: -3px; top: -1px; }
.grow { flex: 1; }
.rail .apps { width: 23px; height: 23px; margin-top: 2px; background: #f5f5f5; border-radius: 50%; display: grid; grid-template-columns: repeat(3, 3px); gap: 2px; place-content: center; }
.apps i { width: 3px; height: 3px; background: #222; }
.rail hr { width: 21px; margin: 0 0 7px; border: 0; border-top: 1px solid #333; }
.rail .ask { margin: 0; }
.ask .icon { width: 18px; height: 18px; }

.strip { height: 32px; display: flex; padding: 0 23.75% 0 21.33%; background: #000; }
.strip svg { width: 100%; height: 32px; display: block; }
</style>
